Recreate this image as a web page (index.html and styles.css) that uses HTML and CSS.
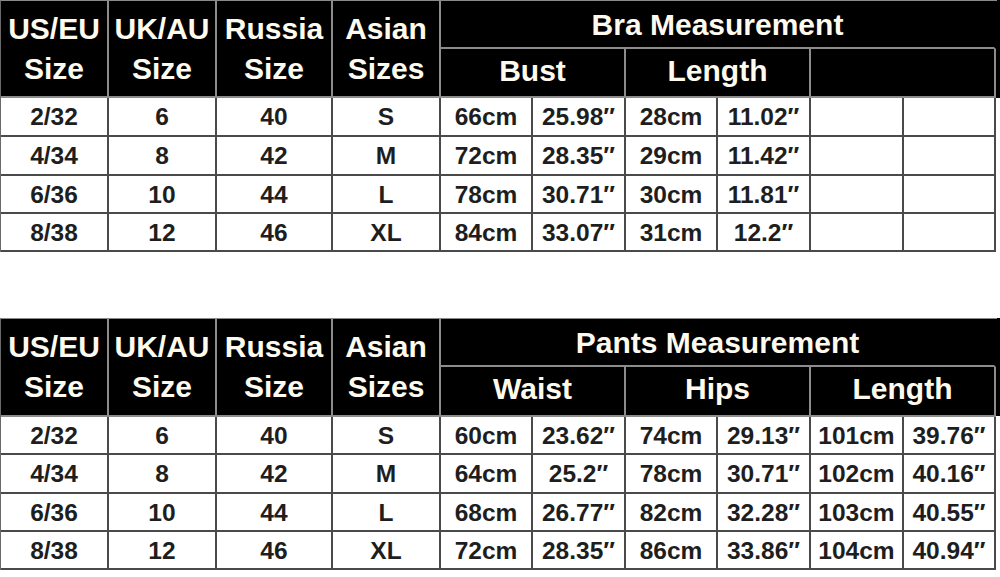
FILE: index.html
```html
<!DOCTYPE html>
<html>
<head>
<meta charset="utf-8">
<link rel="stylesheet" href="styles.css">
</head>
<body>
<div class="page">
  <div class="sheet sheet-top">
    <div class="grid">
      <div class="h tall">US/EU<br>Size</div>
      <div class="h tall">UK/AU<br>Size</div>
      <div class="h tall">Russia<br>Size</div>
      <div class="h tall">Asian<br>Sizes</div>
      <div class="h title r1">Bra Measurement</div>
      <div class="h sub r2">Bust</div>
      <div class="h sub r2">Length</div>
      <div class="h sub r2"></div>

      <div class="d">2/32</div><div class="d">6</div><div class="d">40</div><div class="d">S</div>
      <div class="d">66cm</div><div class="d">25.98″</div><div class="d">28cm</div><div class="d">11.02″</div><div class="d"></div><div class="d"></div>

      <div class="d">4/34</div><div class="d">8</div><div class="d">42</div><div class="d">M</div>
      <div class="d">72cm</div><div class="d">28.35″</div><div class="d">29cm</div><div class="d">11.42″</div><div class="d"></div><div class="d"></div>

      <div class="d">6/36</div><div class="d">10</div><div class="d">44</div><div class="d">L</div>
      <div class="d">78cm</div><div class="d">30.71″</div><div class="d">30cm</div><div class="d">11.81″</div><div class="d"></div><div class="d"></div>

      <div class="d">8/38</div><div class="d">12</div><div class="d">46</div><div class="d">XL</div>
      <div class="d">84cm</div><div class="d">33.07″</div><div class="d">31cm</div><div class="d">12.2″</div><div class="d"></div><div class="d"></div>
    </div>
  </div>

  <div class="sheet sheet-bottom">
    <div class="grid">
      <div class="h tall">US/EU<br>Size</div>
      <div class="h tall">UK/AU<br>Size</div>
      <div class="h tall">Russia<br>Size</div>
      <div class="h tall">Asian<br>Sizes</div>
      <div class="h title r1">Pants Measurement</div>
      <div class="h sub r2">Waist</div>
      <div class="h sub r2">Hips</div>
      <div class="h sub r2">Length</div>

      <div class="d">2/32</div><div class="d">6</div><div class="d">40</div><div class="d">S</div>
      <div class="d">60cm</div><div class="d">23.62″</div><div class="d">74cm</div><div class="d">29.13″</div><div class="d">101cm</div><div class="d">39.76″</div>

      <div class="d">4/34</div><div class="d">8</div><div class="d">42</div><div class="d">M</div>
      <div class="d">64cm</div><div class="d">25.2″</div><div class="d">78cm</div><div class="d">30.71″</div><div class="d">102cm</div><div class="d">40.16″</div>

      <div class="d">6/36</div><div class="d">10</div><div class="d">44</div><div class="d">L</div>
      <div class="d">68cm</div><div class="d">26.77″</div><div class="d">82cm</div><div class="d">32.28″</div><div class="d">103cm</div><div class="d">40.55″</div>

      <div class="d">8/38</div><div class="d">12</div><div class="d">46</div><div class="d">XL</div>
      <div class="d">72cm</div><div class="d">28.35″</div><div class="d">86cm</div><div class="d">33.86″</div><div class="d">104cm</div><div class="d">40.94″</div>
    </div>
  </div>
</div>
</body>
</html>
```

FILE: styles.css
```css
html, body {
  margin: 0;
  padding: 0;
  background: #fff;
}

.page {
  width: 1000px;
  height: 577px;
  overflow: hidden;
  font-family: "Liberation Sans", Arial, sans-serif;
  font-weight: bold;
}

.sheet {
  width: 1000px;
  background: linear-gradient(to bottom, #000 0, #000 98px, transparent 98px);
}

.sheet-bottom {
  margin-top: 66px;
}

.grid {
  display: grid;
  width: 997px;
  box-sizing: border-box;
  border-left: 1px solid #6a6a6a;
  border-top: 1px solid #8a8a8a;
  grid-template-columns: 108px 108px 116px 108px 92px 93px 92px 93px 93px 92px;
  grid-template-rows: 48px 49px 39px 39px 38px 38px;
}

.sheet-bottom .grid {
  grid-template-rows: 48px 50px 38px 39px 38px 38px;
}

.h {
  background: #000;
  color: #fffaee;
  box-sizing: border-box;
  border-right: 2px solid #8c8c8c;
  border-bottom: 2px solid #8c8c8c;
  display: flex;
  align-items: center;
  justify-content: center;
  text-align: center;
  font-size: 30px;
  line-height: 40px;
}

.tall {
  grid-row: span 2;
}

.title {
  grid-column: span 6;
  padding-top: 1px;
  border-right-color: #000;
}

.sub {
  grid-column: span 2;
  padding-bottom: 4px;
}

.d {
  background: #fff;
  color: #1e1e1e;
  box-sizing: border-box;
  border-right: 2px solid #4a4a4a;
  border-bottom: 2px solid #4a4a4a;
  display: flex;
  align-items: center;
  justify-content: center;
  font-size: 24.5px;
  line-height: 1;
  padding-top: 2px;
}
```
